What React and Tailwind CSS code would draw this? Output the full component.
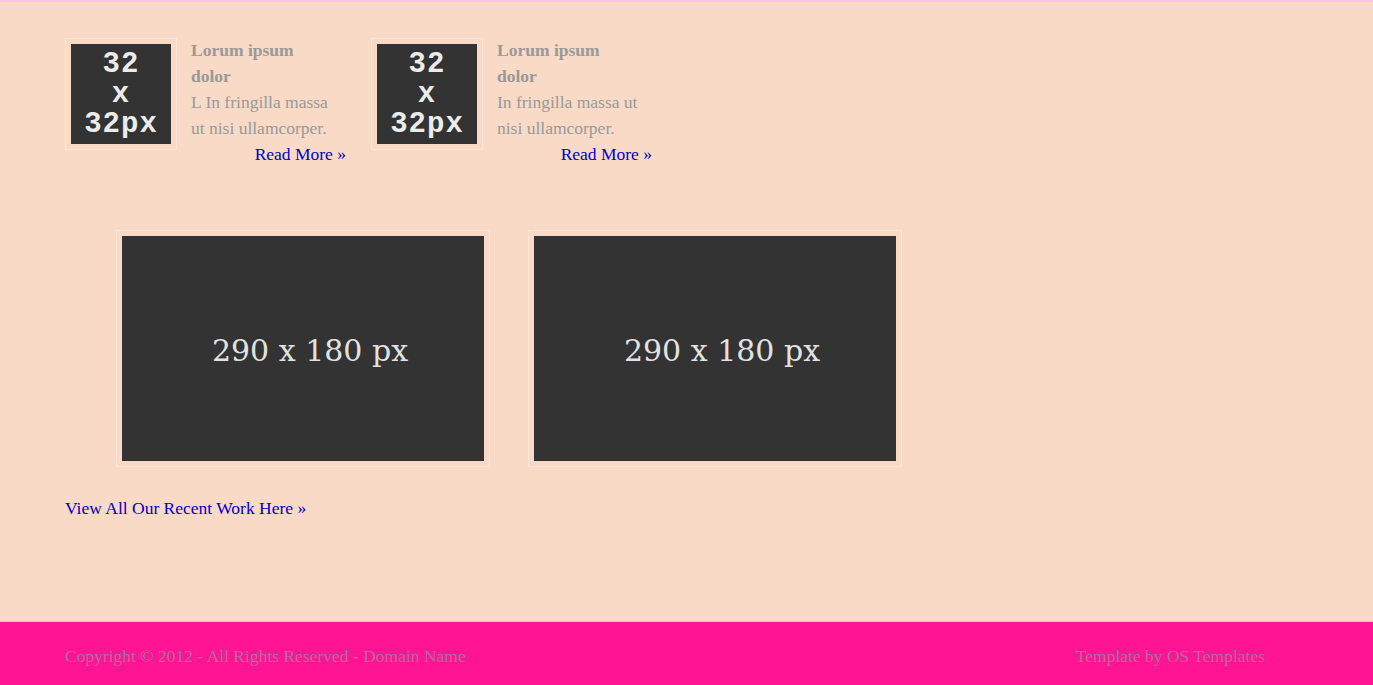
export default function App() {
  const font = { fontFamily: '"Liberation Serif", "DejaVu Serif", serif' };
  const Thumb = () => (
    <div className="border border-[#fbe5d8] p-[5px] shrink-0 self-start">
      <div className="w-[100px] h-[100px] bg-[#333333] flex flex-col items-center justify-center leading-[30px] text-[#ececec] font-bold text-[29px] tracking-[1px] pt-[2px]" style={{ fontFamily: '"Liberation Mono", "DejaVu Sans Mono", monospace' }}>
        <span>32</span>
        <span>x</span>
        <span>32px</span>
      </div>
    </div>
  );
  const Item = ({ text }) => (
    <div className="flex items-start w-[281px]">
      <Thumb />
      <div className="ml-[14px] w-[155px] text-[17.5px] leading-[26px] -mt-[1px]">
        <div className="font-bold text-[#999999] w-[140px]">Lorum ipsum dolor</div>
        <div className="text-[#999999] w-[148px]">{text}</div>
        <div className="text-right text-[#0000cc]">Read More »</div>
      </div>
    </div>
  );
  const Big = () => (
    <div className="border border-[#fbe5d8] p-[5px]">
      <div className="w-[362px] h-[225px] bg-[#333333] flex items-center justify-center text-[#e2e2e2] text-[30px] pl-[14px] pt-[4px]" style={{ fontFamily: '"DejaVu Serif", serif' }}>
        290 x 180 px
      </div>
    </div>
  );
  return (
    <div className="w-[1373px] h-[685px] flex flex-col bg-[#f8dac6] border-t-2 border-[#f6c6ea] overflow-hidden" style={font}>
      <div className="flex-1 pl-[65px]">
        <div className="flex items-start gap-[25px] mt-[36px]">
          <Item text="L In fringilla massa ut nisi ullamcorper." />
          <Item text="In fringilla massa ut nisi ullamcorper." />
        </div>
        <div className="flex gap-[38px] ml-[51px] mt-[63px]">
          <Big />
          <Big />
        </div>
        <div className="mt-[28px] text-[17.5px] leading-[26px] text-[#0000cc]">View All Our Recent Work Here »</div>
      </div>
      <div className="border-t border-[#f9b8d0] bg-[#ff1493] h-[64px] flex items-center justify-between pl-[65px] pr-[108px] pt-[6px] text-[17.5px] text-[#b26ba0]">
        <span>Copyright © 2012 - All Rights Reserved - Domain Name</span>
        <span>Template by OS Templates</span>
      </div>
    </div>
  );
}
